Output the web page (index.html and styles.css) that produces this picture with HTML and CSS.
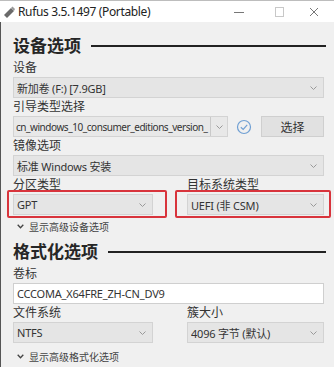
FILE: index.html
```html
<!DOCTYPE html>
<html lang="zh">
<head>
<meta charset="utf-8">
<link rel="stylesheet" href="styles.css">
</head>
<body>
<div class="win">
  <div class="titlebar">
    <svg class="appicon" width="12" height="12" viewBox="0 0 12 12"><path d="M1 9 L8 2 L11 5 L4 12 Z" fill="#6a6a6a"/><path d="M8 2 L9.5 0.5 L12 3 L11 5 Z" fill="#9a9a9a"/></svg>
    <span class="title">Rufus 3.5.1497 (Portable)</span>
    <div class="controls">
      <svg width="46" height="22" viewBox="0 0 46 22"><line x1="18" y1="11.5" x2="28" y2="11.5" stroke="#777" stroke-width="1"/></svg>
      <svg width="34" height="22" viewBox="0 0 34 22"><rect x="13.5" y="6.5" width="8" height="9" fill="none" stroke="#c8c8c8" stroke-width="1"/></svg>
      <svg width="38" height="22" viewBox="0 0 38 22"><path d="M14 7 L22 15 M22 7 L14 15" stroke="#777" stroke-width="1"/></svg>
    </div>
  </div>
  <div class="body">
    <div class="heading"><span>设备选项</span><i class="rule"></i></div>

    <div class="field">
      <div class="label">设备</div>
      <div class="select"><span class="val">新加卷 (F:) [7.9GB]</span><svg class="chev" width="7" height="4" viewBox="0 0 7 4"><path d="M0.5 0.5 L3.5 3.5 L6.5 0.5" fill="none" stroke="#999"/></svg></div>
    </div>

    <div class="field">
      <div class="label">引导类型选择</div>
      <div class="bootrow">
        <div class="select split"><span class="val clip">cn_windows_10_consumer_editions_version_</span><span class="arrowpart"><svg class="chev" width="7" height="4" viewBox="0 0 7 4"><path d="M0.5 0.5 L3.5 3.5 L6.5 0.5" fill="none" stroke="#999"/></svg></span></div>
        <svg class="check" width="16" height="16" viewBox="0 0 16 16"><circle cx="8" cy="8" r="6.5" fill="none" stroke="#6f9fd3" stroke-width="1.2"/><path d="M4.8 8.2 L7.2 10.4 L11.2 5.8" fill="none" stroke="#6f9fd3" stroke-width="1.2"/></svg>
        <div class="button">选择</div>
      </div>
    </div>

    <div class="field">
      <div class="label">镜像选项</div>
      <div class="select"><span class="val">标准 Windows 安装</span><svg class="chev" width="7" height="4" viewBox="0 0 7 4"><path d="M0.5 0.5 L3.5 3.5 L6.5 0.5" fill="none" stroke="#999"/></svg></div>
    </div>

    <div class="cols">
      <div class="field">
        <div class="label">分区类型</div>
        <div class="select mark mark-left"><span class="val">GPT</span><svg class="chev" width="7" height="4" viewBox="0 0 7 4"><path d="M0.5 0.5 L3.5 3.5 L6.5 0.5" fill="none" stroke="#999"/></svg></div>
      </div>
      <div class="field">
        <div class="label">目标系统类型</div>
        <div class="select mark mark-right"><span class="val">UEFI (非 CSM)</span><svg class="chev" width="7" height="4" viewBox="0 0 7 4"><path d="M0.5 0.5 L3.5 3.5 L6.5 0.5" fill="none" stroke="#999"/></svg></div>
      </div>
    </div>

    <div class="toggle"><svg width="7" height="5" viewBox="0 0 7 5"><path d="M0.7 0.8 L3.5 3.8 L6.3 0.8" fill="none" stroke="#444" stroke-width="1.3"/></svg><span>显示高级设备选项</span></div>

    <div class="heading h2"><span>格式化选项</span><i class="rule"></i></div>

    <div class="field">
      <div class="label">卷标</div>
      <div class="input">CCCOMA_X64FRE_ZH-CN_DV9</div>
    </div>

    <div class="cols">
      <div class="field">
        <div class="label">文件系统</div>
        <div class="select"><span class="val">NTFS</span><svg class="chev" width="7" height="4" viewBox="0 0 7 4"><path d="M0.5 0.5 L3.5 3.5 L6.5 0.5" fill="none" stroke="#999"/></svg></div>
      </div>
      <div class="field">
        <div class="label">簇大小</div>
        <div class="select"><span class="val">4096 字节 (默认)</span><svg class="chev" width="7" height="4" viewBox="0 0 7 4"><path d="M0.5 0.5 L3.5 3.5 L6.5 0.5" fill="none" stroke="#999"/></svg></div>
      </div>
    </div>

    <div class="toggle last"><svg width="7" height="5" viewBox="0 0 7 5"><path d="M0.7 0.8 L3.5 3.8 L6.3 0.8" fill="none" stroke="#444" stroke-width="1.3"/></svg><span>显示高级格式化选项</span></div>
  </div>
</div>
</body>
</html>
```

FILE: styles.css
```css
* { box-sizing: border-box; }
html, body { margin: 0; padding: 0; }
body {
  width: 334px;
  height: 367px;
  overflow: hidden;
  background: #f0f0f0;
  font-family: "Noto Sans", "Noto Sans CJK SC", sans-serif;
  color: #333;
}
.win { width: 334px; height: 367px; display: flex; flex-direction: column; }
.titlebar {
  height: 22px;
  background: #fff;
  border-top: 1px solid #bdbdbd;
  display: flex;
  align-items: center;
  padding-left: 3px;
}
.appicon { flex: none; }
.title {
  margin-left: 3px;
  font-size: 12px;
  color: #222;
  font-family: "Noto Sans", "Noto Sans CJK SC", sans-serif;
  letter-spacing: -0.35px;
}
.controls { margin-left: auto; display: flex; }
.controls svg { display: block; }
.body {
  flex: 1;
  border-left: 1px solid #555;
  padding: 0 10px 0 12px;
  display: flex;
  flex-direction: column;
}
.heading {
  height: 30px;
  margin-top: 7px;
  display: flex;
  align-items: center;
  font-family: "Noto Sans CJK SC", sans-serif;
  font-size: 17px;
  font-weight: bold;
  color: #262626;
}
.heading .rule {
  flex: 1;
  height: 2px;
  background: #222;
  margin: 4px -2px 0 10px;
}
.heading.h2 { margin-top: 1px; }
.field { display: flex; flex-direction: column; }
.label {
  height: 16px;
  line-height: 16px;
  margin-bottom: 2px;
  font-family: "Noto Sans CJK SC", sans-serif;
  font-size: 12px;
  color: #333;
}
.select {
  height: 21px;
  background: #e5e5e5;
  border: 1px solid #d3d3d3;
  display: flex;
  align-items: center;
  padding: 0 6px 0 3px;
  font-size: 11px;
  color: #333;
  font-family: "Noto Sans", "Noto Sans CJK SC", sans-serif;
  white-space: nowrap;
}
.select .val { flex: 1; min-width: 0; overflow: hidden; letter-spacing: -0.2px; }
.chev { flex: none; }
.bootrow { display: flex; align-items: center; }
.select.split { width: 215px; flex: none; padding-right: 0; padding-left: 2px; background: #e8e8e8; }
.select .clip { font-size: 10px; letter-spacing: -0.45px; }
.select .arrowpart {
  flex: none;
  width: 17px;
  height: 100%;
  display: flex;
  align-items: center;
  justify-content: center;
  border-left: 1px solid #c9c9c9;
}
.check { margin-left: 8px; flex: none; }
.button {
  margin-left: auto;
  width: 63px;
  height: 21px;
  background: #e1e1e1;
  border: 1px solid #cfcfcf;
  display: flex;
  align-items: center;
  justify-content: center;
  font-family: "Noto Sans CJK SC", sans-serif;
  font-size: 12px;
  color: #333;
}
.cols { display: grid; grid-template-columns: 140px 1fr; column-gap: 34px; }
.mark { position: relative; }
.mark::after {
  content: "";
  position: absolute;
  border: 2px solid #d8343c;
  border-radius: 2px;
}
.mark-left::after { top: -5px; bottom: -4px; left: -7px; right: -15px; }
.mark-right::after { top: -5px; bottom: -4px; left: -13px; right: -8px; }
.toggle {
  margin-top: 3px;
  height: 16px;
  display: flex;
  align-items: center;
  padding-left: 4px;
  font-family: "Noto Sans CJK SC", sans-serif;
  font-size: 10px;
  color: #444;
}
.toggle svg { margin-right: 5px; flex: none; }
.toggle.last { margin-top: 5px; }
.input {
  height: 21px;
  background: #fff;
  border: 1px solid #cfcfcf;
  display: flex;
  align-items: center;
  padding-left: 3px;
  font-size: 11px;
  color: #333;
  font-family: "Noto Sans", sans-serif;
  letter-spacing: -0.2px;
}
```
